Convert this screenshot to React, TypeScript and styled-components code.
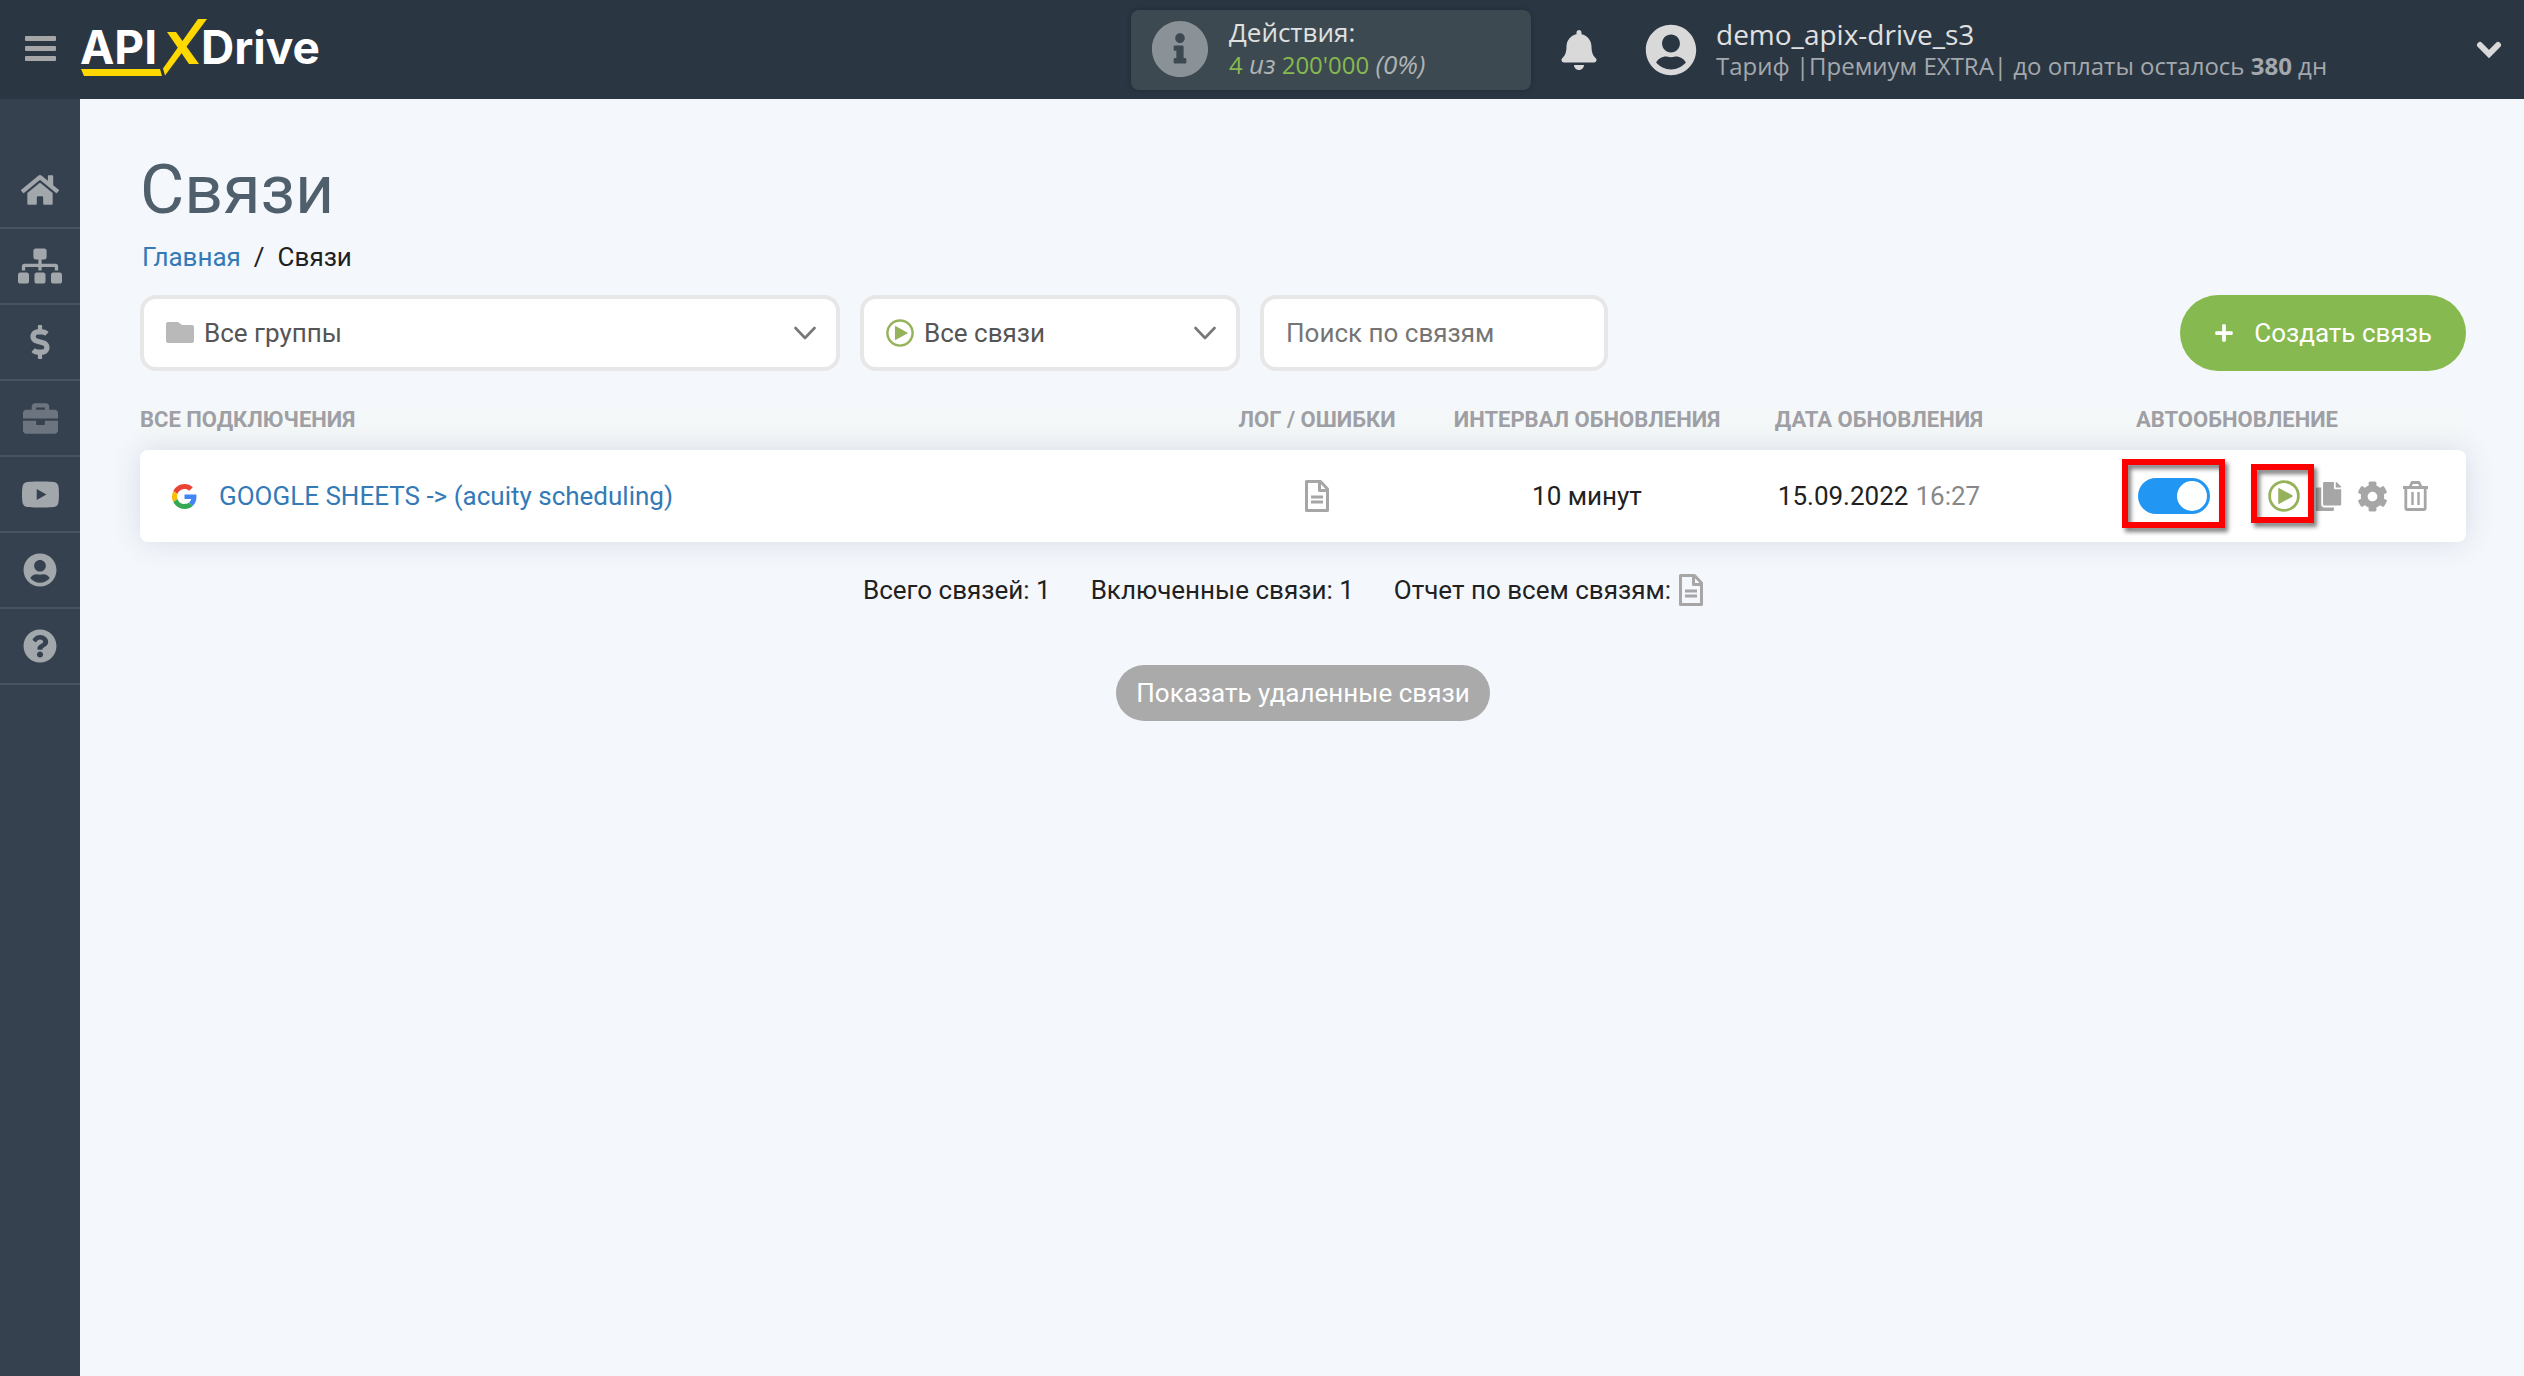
import React, { useState } from "react";
import styled, { createGlobalStyle } from "styled-components";
import {
  FaBell,
  FaBriefcase,
  FaCog,
  FaCopy,
  FaDollarSign,
  FaHome,
  FaInfoCircle,
  FaPlus,
  FaQuestionCircle,
  FaSitemap,
  FaUserCircle,
  FaYoutube,
} from "react-icons/fa";

const GlobalStyle = createGlobalStyle`
  *, *::before, *::after { box-sizing: border-box; }
  body {
    margin: 0;
    background: #f4f7fc;
    color: #212121;
    font-family: Roboto, "Noto Sans", sans-serif;
    font-size: 26px;
    line-height: 32px;
  }
  button, input, select { font: inherit; color: inherit; }
  a { color: #337ab7; text-decoration: none; }
  svg { display: block; flex: none; }
`;

const Page = styled.div`
  min-height: 100vh;
  display: flex;
  flex-direction: column;
`;

/* Top bar */

const TopBar = styled.header`
  height: 99px;
  display: flex;
  align-items: center;
  padding: 0 22px 0 24px;
  background: #2b3643;
  font-family: "Open Sans", "Noto Sans", sans-serif;
  font-size: 24px;
  color: #d9d9d9;
`;

const IconButton = styled.button<{ $color?: string; $width?: number }>`
  width: ${(p) => (p.$width ? `${p.$width}px` : "auto")};
  display: flex;
  align-items: center;
  justify-content: center;
  padding: 0;
  border: 0;
  background: none;
  color: ${(p) => p.$color ?? "#a6a6a6"};
  cursor: pointer;
`;

const LogoLink = styled.a`
  margin-left: 24px;
`;

const TopRight = styled.div`
  margin-left: auto;
  display: flex;
  align-items: center;
  height: 100%;
`;

const Usage = styled.div`
  width: 400px;
  height: 80px;
  display: flex;
  align-items: center;
  gap: 20px;
  padding: 0 0 2px 20px;
  border-radius: 8px;
  background: #3c4950;
  box-shadow: 0 0 6px rgba(0, 0, 0, 0.2);
  svg { color: #8a9197; }
`;

const TwoLines = styled.div`
  display: flex;
  flex-direction: column;
  white-space: nowrap;
`;

const MainLine = styled.span<{ $size?: number }>`
  font-size: ${(p) => p.$size ?? 26}px;
  color: #e0e0e0;
`;

const SubLine = styled.span`
  color: #a3a8ad;
  em { font-size: 26px; color: #b0b3b5; }
`;

const Green = styled.span`
  color: #86b94f;
`;

const Account = styled.button`
  flex: none;
  width: 857px;
  margin-left: 46px;
  padding: 0;
  border: 0;
  background: none;
  text-align: left;
  display: flex;
  align-items: center;
  gap: 19px;
  cursor: pointer;
`;

const BellSlot = styled.div`
  margin-left: 28px;
`;

const AccountArrow = styled.span`
  margin-left: auto;
`;

/* Side menu */

const Body = styled.div`
  flex: 1;
  display: flex;
`;

const SideMenu = styled.nav`
  flex: none;
  width: 80px;
  padding-top: 54px;
  background: #364150;
`;

const SideItem = styled.a<{ $dim?: boolean }>`
  height: 76px;
  display: flex;
  align-items: center;
  justify-content: center;
  border-bottom: 2px solid #475360;
  color: ${(p) => (p.$dim ? "#6c757f" : "#a2a7ac")};
`;

/* Content */

const Content = styled.main`
  flex: 1;
  min-width: 0;
  padding: 55px 58px 40px 60px;
`;

const Title = styled.h1`
  margin: 0;
  font-size: 68px;
  line-height: 72px;
  font-weight: 400;
  color: #4f5f6b;
`;

const Crumbs = styled.nav`
  display: flex;
  gap: 13px;
  margin-top: 15px;
  padding-left: 2px;
`;

const Filters = styled.form`
  display: flex;
  gap: 20px;
  margin-top: 22px;
`;

const Field = styled.label<{ $width: number }>`
  width: ${(p) => p.$width}px;
  height: 76px;
  display: flex;
  align-items: center;
  gap: 10px;
  padding: 0 20px 0 22px;
  border: 4px solid #e7e7e7;
  border-radius: 16px;
  background: #fff;
  color: #555;
`;

const FieldSelect = styled.select`
  flex: 1;
  min-width: 0;
  height: 100%;
  padding: 0;
  border: 0;
  outline: 0;
  background: none;
  appearance: none;
`;

const FieldInput = styled.input`
  flex: 1;
  min-width: 0;
  height: 100%;
  padding: 0;
  border: 0;
  outline: 0;
  background: none;
  &::placeholder { color: #757575; opacity: 1; }
`;

const CreateButton = styled.button`
  margin-left: auto;
  height: 76px;
  display: flex;
  align-items: center;
  gap: 20px;
  padding: 0 34px;
  border: 0;
  border-radius: 38px;
  background: #86b94f;
  color: #fff;
  white-space: nowrap;
  cursor: pointer;
`;

const Table = styled.table`
  display: block;
  margin-top: 31px;
  thead, tbody { display: block; }
`;

const HeadRow = styled.tr`
  display: grid;
  grid-template-columns: 1082fr 190fr 350fr 234fr 470fr;
  height: 48px;
  background: linear-gradient(#f4f7fc, #f4f8f8 25%, #f4f8f8 60%, #f4f7fc);
`;

const HeadCell = styled.th<{ $align?: string; $indent?: boolean }>`
  padding: 0 0 0 ${(p) => (p.$indent ? "140px" : "0")};
  text-align: ${(p) => p.$align ?? "center"};
  font-size: 22px;
  line-height: 36px;
  font-weight: 700;
  color: #9f9fa5;
  text-transform: uppercase;
  white-space: nowrap;
`;

const Row = styled.tr`
  position: relative;
  display: grid;
  grid-template-columns: 1082fr 190fr 350fr 234fr 470fr;
  height: 92px;
  border-radius: 8px;
  background: #fff;
  box-shadow: 0 0 30px rgba(60, 60, 80, 0.14);
`;

const Cell = styled.td<{ $start?: boolean }>`
  display: flex;
  align-items: center;
  justify-content: ${(p) => (p.$start ? "flex-start" : "center")};
  gap: 7px;
  padding: 0;
  white-space: nowrap;
`;

const NameCell = styled(Cell)`
  padding-left: 32px;
  gap: 22px;
`;

const ActionCell = styled(Cell)`
  padding-left: 142px;
  gap: 16px;
`;

const Muted = styled.span`
  color: #888;
`;

const Marked = styled.span<{ $inset: string; $gap?: number }>`
  position: relative;
  display: flex;
  margin-right: ${(p) => p.$gap ?? 0}px;
  &::after {
    content: "";
    position: absolute;
    inset: ${(p) => p.$inset};
    border: 6px solid #f00;
    pointer-events: none;
    filter: drop-shadow(3px 4px 2px rgba(0, 0, 0, 0.5));
  }
`;

const Toggle = styled.input`
  appearance: none;
  width: 72px;
  height: 36px;
  margin: 0;
  padding: 3px;
  display: flex;
  border-radius: 18px;
  background: #ccc;
  cursor: pointer;
  &::before {
    content: "";
    width: 30px;
    height: 30px;
    border-radius: 50%;
    background: #fff;
  }
  &:checked {
    background: #2196f3;
    justify-content: flex-end;
  }
`;

const Summary = styled.div`
  display: flex;
  justify-content: center;
  margin-top: 32px;
  color: #212121;
`;

const SummaryItem = styled.span`
  display: flex;
  align-items: center;
  gap: 8px;
  margin-right: 40px;
  white-space: nowrap;
`;

const DeletedButton = styled.button`
  display: block;
  height: 56px;
  margin: 59px auto 0;
  padding: 0 20px;
  border: 0;
  border-radius: 28px;
  background: #aaa;
  color: #fff;
  cursor: pointer;
`;

/* Drawings */

const Burger = () => (
  <svg width="32" height="28" viewBox="0 0 32 28" fill="currentColor" aria-hidden="true">
    <rect x="1" y="0" width="31" height="5" rx="1" />
    <rect x="1" y="10" width="31" height="5" rx="1" />
    <rect x="1" y="20" width="31" height="5" rx="1" />
  </svg>
);

const Logo = () => (
  <svg width="246" height="62" viewBox="80 18 246 62" role="img" aria-label="ApiX-Drive">
    <g fill="#fff" fontFamily="Inter, sans-serif" fontWeight="700" fontSize="46">
      <text x="80" y="63">API</text>
      <text x="201" y="63">Drive</text>
    </g>
    <g fill="#ffd800">
      <path d="M81 68h79l2 7H84z" />
      <path d="M198 18h9L165 74.500l-2-7z" />
      <path d="M167 31h9l23 32h-10z" />
    </g>
  </svg>
);

const Chevron = () => (
  <svg width="22" height="14" viewBox="0 0 22 14" fill="none" stroke="#777" strokeWidth="2.600" strokeLinecap="round" strokeLinejoin="round" aria-hidden="true">
    <path d="M1.500 2L11 12L20.500 2" />
  </svg>
);

const HeavyChevron = () => (
  <svg width="26" height="18" viewBox="0 0 26 18" fill="none" stroke="#d9d9d9" strokeWidth="6" strokeLinejoin="miter" strokeLinecap="round" aria-hidden="true">
    <path d="M4 4l9 9l9-9" />
  </svg>
);

const Folder = () => (
  <svg width="28" height="22" viewBox="0 0 28 22" fill="#b9b9b9" aria-hidden="true">
    <path d="M2 0h10l4 3h10a2 2 0 0 1 2 2v14a2 2 0 0 1-2 2H2a2 2 0 0 1-2-2V2a2 2 0 0 1 2-2z" />
  </svg>
);

const PlayRing = ({ size }: { size: number }) => (
  <svg width={size} height={size} viewBox="0 0 32 32" fill="none" aria-hidden="true">
    <circle cx="16" cy="16" r="14.400" stroke="#96b35c" strokeWidth="2.800" />
    <path d="M11 8.800v14.400l13-7.200z" fill="#96b35c" stroke="#96b35c" strokeWidth="1.500" strokeLinejoin="round" />
  </svg>
);

const Document = () => (
  <svg width="24" height="32" viewBox="0 0 24 32" fill="none" stroke="#a6a6a6" strokeWidth="3" strokeLinejoin="round" aria-hidden="true">
    <path d="M1.500 1.500h14l7 7.500v21.500h-21z" />
    <path d="M14.500 2v8.500H22" />
    <path d="M6 17h12M6 22h12" />
  </svg>
);

const Trash = () => (
  <svg width="25" height="30" viewBox="0 0 25 30" fill="none" stroke="#a6a6a6" strokeWidth="2.800" strokeLinejoin="round" aria-hidden="true">
    <path d="M0 6.500h25M7 6l2-4.500h7L18 6" />
    <path d="M2.800 7v20a1.500 1.500 0 0 0 1.500 1.500h16.400a1.500 1.500 0 0 0 1.500-1.500V7" />
    <path d="M9.500 11v13M15.500 11v13" strokeWidth="2.400" />
  </svg>
);

const GoogleG = () => (
  <svg width="25" height="25" viewBox="0 0 48 48" aria-hidden="true">
    <path fill="#EA4335" d="M24 9.500c3.540 0 6.710 1.220 9.210 3.600l6.850-6.850C35.900 2.380 30.470 0 24 0 14.620 0 6.510 5.380 2.560 13.220l7.980 6.190C12.430 13.720 17.740 9.500 24 9.500z" />
    <path fill="#4285F4" d="M46.980 24.550c0-1.570-.15-3.090-.38-4.550H24v9.020h12.940c-.58 2.960-2.260 5.480-4.780 7.180l7.730 6c4.510-4.180 7.090-10.360 7.090-17.650z" />
    <path fill="#FBBC05" d="M10.530 28.590c-.48-1.450-.76-2.990-.76-4.590s.27-3.140.76-4.590l-7.980-6.190C.92 16.460 0 20.120 0 24c0 3.880.92 7.540 2.560 10.780l7.970-6.190z" />
    <path fill="#34A853" d="M24 48c6.480 0 11.930-2.130 15.890-5.810l-7.730-6c-2.150 1.450-4.920 2.300-8.160 2.300-6.260 0-11.570-4.220-13.470-9.910l-7.980 6.190C6.510 42.620 14.620 48 24 48z" />
  </svg>
);

const menu = [
  { label: "Главная", icon: <FaHome size={38} /> },
  { label: "Связи", icon: <FaSitemap size={44} /> },
  { label: "Оплата", icon: <FaDollarSign size={34} /> },
  { label: "Услуги", icon: <FaBriefcase size={35} />, dim: true },
  { label: "Видео", icon: <FaYoutube size={39} /> },
  { label: "Профиль", icon: <FaUserCircle size={34} /> },
  { label: "Помощь", icon: <FaQuestionCircle size={34} /> },
];

export default function App() {
  const [enabled, setEnabled] = useState(true);
  return (
    <Page>
      <GlobalStyle />
      <TopBar>
        <IconButton type="button" aria-label="Меню"><Burger /></IconButton>
        <LogoLink href="#"><Logo /></LogoLink>
        <TopRight>
          <Usage>
            <FaInfoCircle size={58} />
            <TwoLines>
              <MainLine>Действия:</MainLine>
              <SubLine><Green>4</Green> <em>из</em> <Green>200'000</Green> <em>(0%)</em></SubLine>
            </TwoLines>
          </Usage>
          <BellSlot>
            <IconButton type="button" aria-label="Уведомления" $color="#d9d9d9"><FaBell size={40} /></IconButton>
          </BellSlot>
          <Account type="button">
            <FaUserCircle size={52} />
            <TwoLines>
              <MainLine $size={28}>demo_apix-drive_s3</MainLine>
              <SubLine>Тариф |Премиум EXTRA| до оплаты осталось <b>380</b> дн</SubLine>
            </TwoLines>
            <AccountArrow><HeavyChevron /></AccountArrow>
          </Account>
        </TopRight>
      </TopBar>
      <Body>
        <SideMenu>
          {menu.map((m) => (
            <SideItem key={m.label} href="#" aria-label={m.label} $dim={m.dim}>{m.icon}</SideItem>
          ))}
        </SideMenu>
        <Content>
          <Title>Связи</Title>
          <Crumbs>
            <a href="#">Главная</a>
            <span>/</span>
            <span>Связи</span>
          </Crumbs>
          <Filters onSubmit={(e) => e.preventDefault()}>
            <Field $width={700}>
              <Folder />
              <FieldSelect aria-label="Группа"><option>Все группы</option></FieldSelect>
              <Chevron />
            </Field>
            <Field $width={380}>
              <PlayRing size={28} />
              <FieldSelect aria-label="Статус"><option>Все связи</option></FieldSelect>
              <Chevron />
            </Field>
            <Field $width={348}>
              <FieldInput type="text" placeholder="Поиск по связям" aria-label="Поиск по связям" />
            </Field>
            <CreateButton type="button"><FaPlus size={20} />Создать связь</CreateButton>
          </Filters>
          <Table>
            <thead>
              <HeadRow>
                <HeadCell $align="left">Все подключения</HeadCell>
                <HeadCell>Лог / ошибки</HeadCell>
                <HeadCell>Интервал обновления</HeadCell>
                <HeadCell>Дата обновления</HeadCell>
                <HeadCell $align="left" $indent>Автообновление</HeadCell>
              </HeadRow>
            </thead>
            <tbody>
              <Row>
                <NameCell $start><GoogleG /><a href="#">GOOGLE SHEETS -&gt; (acuity scheduling)</a></NameCell>
                <Cell><IconButton type="button" aria-label="Лог"><Document /></IconButton></Cell>
                <Cell>10 минут</Cell>
                <Cell>15.09.2022 <Muted>16:27</Muted></Cell>
                <ActionCell $start>
                  <Marked $inset="-19px -15px -14px -16px" $gap={42}>
                    <Toggle type="checkbox" aria-label="Автообновление" checked={enabled} onChange={(e) => setEnabled(e.target.checked)} />
                  </Marked>
                  <Marked $inset="-16px -14px -11px -17px">
                    <IconButton type="button" aria-label="Запустить"><PlayRing size={32} /></IconButton>
                  </Marked>
                  <IconButton type="button" aria-label="Копировать" $width={25}><FaCopy size={29} /></IconButton>
                  <IconButton type="button" aria-label="Настройки" $width={30}><FaCog size={31} /></IconButton>
                  <IconButton type="button" aria-label="Удалить"><Trash /></IconButton>
                </ActionCell>
              </Row>
            </tbody>
          </Table>
          <Summary>
            <SummaryItem>Всего связей: 1</SummaryItem>
            <SummaryItem>Включенные связи: 1</SummaryItem>
            <SummaryItem>Отчет по всем связям:<Document /></SummaryItem>
          </Summary>
          <DeletedButton type="button">Показать удаленные связи</DeletedButton>
        </Content>
      </Body>
    </Page>
  );
}
